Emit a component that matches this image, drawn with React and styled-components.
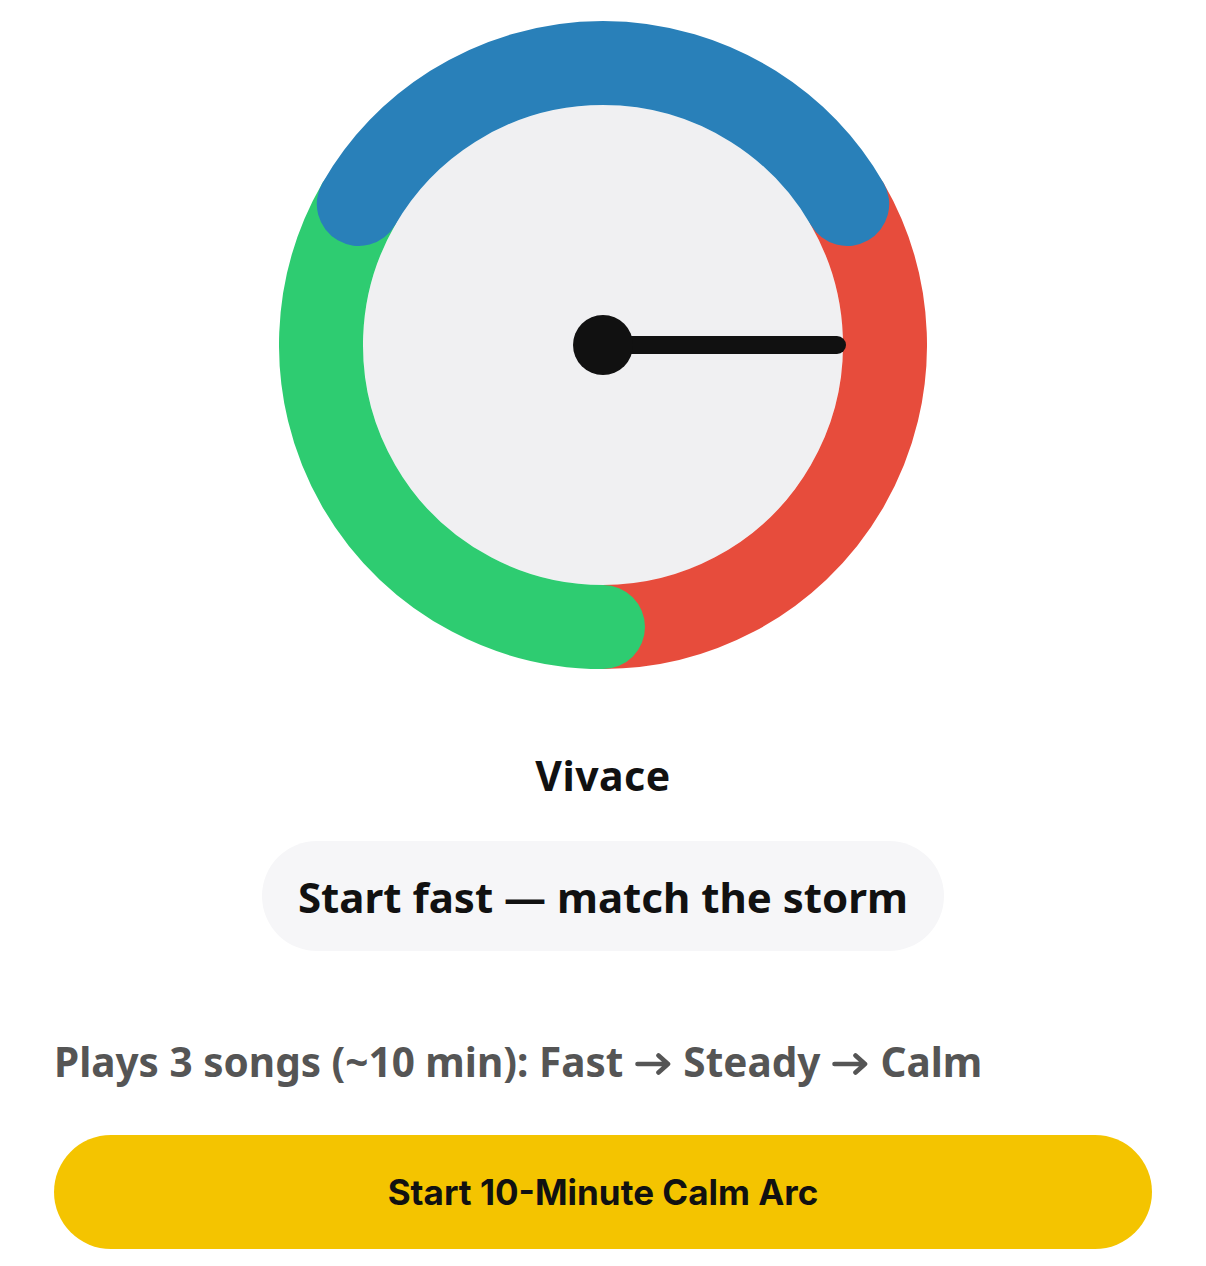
import React from 'react';
import styled, { createGlobalStyle } from 'styled-components';

const GlobalStyle = createGlobalStyle`
	body {
		margin: 0;
		background: #ffffff;
		font-family: 'Noto Sans', sans-serif;
	}
`;

const SIZE = 648;
const C = SIZE / 2;
const R = 282;
const STROKE = 84;

// point on the ring, angle in degrees (0 = right, counter-clockwise)
const pt = (deg) => {
	const a = (deg * Math.PI) / 180;
	return [C + R * Math.cos(a), C - R * Math.sin(a)];
};

const arc = (from, to) => {
	const [x1, y1] = pt(from);
	const [x2, y2] = pt(to);
	return `M ${x1} ${y1} A ${R} ${R} 0 0 1 ${x2} ${y2}`;
};

const segments = [
	{ d: arc(30, -90), color: '#e74c3c' },
	{ d: arc(-90, -210), color: '#2ecc71' },
	{ d: arc(150, 30), color: '#2980b9' },
];

const Gauge = ({ needleAngle = 0 }) => {
	const a = (needleAngle * Math.PI) / 180;
	const nx = C + 234 * Math.cos(a);
	const ny = C - 234 * Math.sin(a);
	return (
		<GaugeSvg viewBox={`0 0 ${SIZE} ${SIZE}`} width={SIZE} height={SIZE}>
			<circle cx={C} cy={C} r={R - STROKE / 2} fill="#f0f0f2" />
			{segments.map((s, i) => (
				<path
					key={i}
					d={s.d}
					fill="none"
					stroke={s.color}
					strokeWidth={STROKE}
					strokeLinecap="round"
				/>
			))}
			<line x1={C} y1={C} x2={nx} y2={ny} stroke="#111" strokeWidth="18" strokeLinecap="round" />
			<circle cx={C} cy={C} r="30" fill="#111" />
		</GaugeSvg>
	);
};

const Arrow = () => (
	<ArrowSvg viewBox="0 0 36 22" width="36" height="22">
		<path
			d="M2.5 11 H33 M23.5 2.5 L33 11 L23.5 19.5"
			fill="none"
			stroke="currentColor"
			strokeWidth="4.6"
			strokeLinecap="round"
			strokeLinejoin="round"
		/>
	</ArrowSvg>
);

const App = () => {
	return (
		<Page>
			<GlobalStyle />
			<Gauge needleAngle={0} />
			<TempoName>Vivace</TempoName>
			<Hint>Start fast — match the storm</Hint>
			<Plan>
				Plays 3 songs (~10 min): Fast
				<Arrow />
				Steady
				<Arrow />
				Calm
			</Plan>
			<StartButton>Start 10-Minute Calm Arc</StartButton>
		</Page>
	);
};

// CSS // CSS // CSS // CSS // CSS // CSS // CSS // CSS // CSS // CSS // CSS
const Page = styled.div`
	display: flex;
	flex-direction: column;
	align-items: center;
	padding: 21px 54px 17px;
`;

const GaugeSvg = styled.svg`
	display: block;
	flex-shrink: 0;
`;

const TempoName = styled.div`
	margin-top: 82px;
	font-size: 41px;
	line-height: 48px;
	font-weight: 700;
	color: #111;
	letter-spacing: 0.5px;
`;

const Hint = styled.div`
	margin-top: 42px;
	height: 110px;
	display: flex;
	align-items: center;
	padding: 0 36px;
	border-radius: 55px;
	background: #f6f6f8;
	font-size: 42px;
	font-weight: 700;
	color: #111;
`;

const Plan = styled.div`
	align-self: flex-start;
	margin-top: 87px;
	font-size: 40.5px;
	line-height: 48px;
	font-weight: 700;
	color: #555;
	white-space: nowrap;
`;

const ArrowSvg = styled.svg`
	display: inline-block;
	vertical-align: 2px;
	margin: 0 12px;
`;

const StartButton = styled.button`
	margin-top: 49px;
	width: 100%;
	height: 114px;
	border: none;
	border-radius: 57px;
	background: #f4c400;
	color: #111;
	font-family: Inter, 'Noto Sans', sans-serif;
	font-size: 35px;
	font-weight: 700;
	cursor: pointer;
`;

export default App;
